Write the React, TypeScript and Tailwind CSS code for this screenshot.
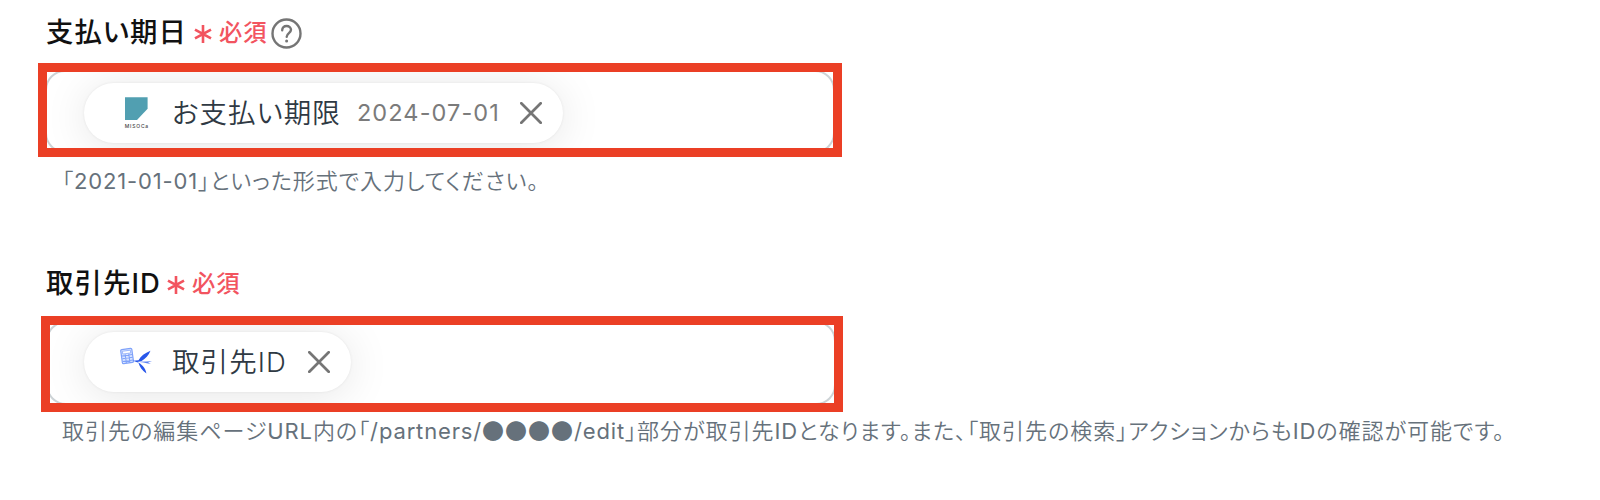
import type { ReactNode } from "react";

const font = "font-['Inter','Noto_Sans_CJK_JP',sans-serif] [font-feature-settings:'palt'] whitespace-nowrap";

function Required() {
  return (
    <>
      <svg className="mt-1 h-[18px] w-[18px] shrink-0" viewBox="0 0 18 18" fill="none" stroke="#f2545f" strokeWidth="2.6">
        <path d="M9 0V18M1 4.6L17 13.4M17 4.6L1 13.4" />
      </svg>
      <span className="mt-0.5 ml-[7px] text-[23.3px] leading-8 font-medium tracking-[0.9px] text-[#f2545f]">必須</span>
    </>
  );
}

function Help() {
  return (
    <svg className="mt-1 ml-1 h-[31px] w-[31px] shrink-0" viewBox="0 0 31 31" fill="none" stroke="#757575" strokeWidth="2.4" strokeLinecap="round">
      <circle cx="15.5" cy="15.5" r="14" />
      <path d="M11.2 12.2C11.2 9.6 13 8 15.6 8C18.1 8 20 9.6 20 11.8C20 15 15.7 15.2 15.7 18.7" />
      <circle cx="15.6" cy="23" r="1.5" fill="#757575" stroke="none" />
    </svg>
  );
}

function Close() {
  return (
    <svg className="h-[22px] w-[22px] shrink-0" viewBox="0 0 22 22" fill="none" stroke="#757575" strokeWidth="2.7" strokeLinecap="round">
      <path d="M1.3 1.3L20.7 20.7M20.7 1.3L1.3 20.7" />
    </svg>
  );
}

function MisocaLogo() {
  return (
    <svg className="h-8 w-8 shrink-0" viewBox="0 0 32 32">
      <path d="M5 0.3H27.6V11.8L17 23H5Z" fill="#519fb1" />
      <text x="4.7" y="30.5" fontSize="5" fontFamily="Inter" fontWeight="500" textLength="23.5" fill="#444">MISOCa</text>
    </svg>
  );
}

function PartnerLogo() {
  return (
    <svg className="h-8 w-8 shrink-0" viewBox="0 0 32 32">
      <g transform="rotate(-8 7 10)" fill="none" stroke="#7fa2fa" strokeWidth="1.2">
        <rect x="1.5" y="2.9" width="11.2" height="14.2" rx="1.2" fill="#dbe6ff" />
        <rect x="3.1" y="4.7" width="8" height="2.8" fill="#fff" strokeWidth="0.7" />
        <path d="M2 9.2H12.5M2 12H12.5M2 14.8H12.5M5.4 8V17M9 8V17" strokeWidth="1" />
      </g>
      <path d="M13 14.8L18.5 14.2C21 10.2 24.5 7.2 30.5 4.8C28.6 9.4 25.6 12.6 21.6 14.9L17.5 15.9C20.5 17.6 25.6 20.8 26.4 27.5C21.8 24.5 19.8 21 18.4 16.8Z" fill="#2857ea" />
      <path d="M18.5 15.8L32 15.2L28 16.6L31 18Z" fill="#5b82f2" />
      <path d="M21 15.9L28 15.8L22 16.5Z" fill="#dfe8ff" />
    </svg>
  );
}

function Chip({ icon, label, value, className }: { icon: ReactNode; label: string; value?: string; className: string }) {
  return (
    <div className={`flex h-[60px] items-center rounded-full bg-white pl-[36px] shadow-[0_0_3px_rgba(0,0,0,0.07),0_4px_44px_rgba(0,0,0,0.10)] ${className}`}>
      {icon}
      <span className="ml-5 text-[27.5px] leading-10 font-[350] tracking-[1.1px] text-[#2f3943]">{label}</span>
      {value && <span className="ml-4 text-[23.5px] leading-10 tracking-[1.1px] text-[#7b7b7b]">{value}</span>}
      <span className="ml-auto flex pr-[21px]">
        <Close />
      </span>
    </div>
  );
}

function Latin({ children }: { children: string }) {
  return <span className="font-normal tracking-[0.85px]">{children}</span>;
}

export default function App() {
  return (
    <main className={`h-[500px] w-[1600px] overflow-hidden bg-white ${font}`}>
      <section className="h-[253px]">
        <div className="flex h-[63px] items-center pl-[46px]">
          <h2 className="w-[148px] text-[27.4px] leading-10 font-medium tracking-[1.1px] text-[#111]">支払い期日</h2>
          <Required />
          <Help />
        </div>
        <div className="ml-[38px] h-[94px] w-[804px] overflow-hidden border-[9px] border-[#eb3f25]">
          <div className="-mx-0.5 -mt-0.5 h-[83px] overflow-hidden rounded-[20px] border-2 border-[#cdd3d6] pt-[11px] pl-[37px]">
            <Chip className="w-[479px]" icon={<MisocaLogo />} label="お支払い期限" value="2024-07-01" />
          </div>
        </div>
        <p className="mt-1 pl-[62px] text-[22px] leading-10 font-[350] tracking-[1px] text-[#66717b]">
          「<Latin>2021-01-01</Latin>」といった形式で入力してください。
        </p>
      </section>
      <section>
        <div className="flex h-[63px] items-center pb-1 pl-[46px]">
          <h2 className="w-[121px] text-[27.4px] leading-10 font-medium tracking-[1.1px] text-[#111]">取引先ID</h2>
          <Required />
        </div>
        <div className="ml-[41px] h-[96px] w-[802px] overflow-hidden border-[9px] border-[#eb3f25]">
          <div className="-mt-1 -mr-0.5 -ml-1 h-[84px] overflow-hidden rounded-[20px] border-2 border-[#cdd3d6] pt-[9px] pl-[36px]">
            <Chip className="w-[267px]" icon={<PartnerLogo />} label="取引先ID" />
          </div>
        </div>
        <p className="-mt-px pl-[62px] text-[22px] leading-9 font-[350] tracking-[1px] text-[#66717b]">
          取引先の編集ページ<Latin>URL</Latin>内の「<Latin>/partners/</Latin>
          <span className="font-['Noto_Sans_CJK_JP',sans-serif] [font-feature-settings:normal]">●●●●</span>
          <Latin>/edit</Latin>」部分が取引先<Latin>ID</Latin>となります。また、「取引先の検索」アクションからも<Latin>ID</Latin>の確認が可能です。
        </p>
      </section>
    </main>
  );
}
